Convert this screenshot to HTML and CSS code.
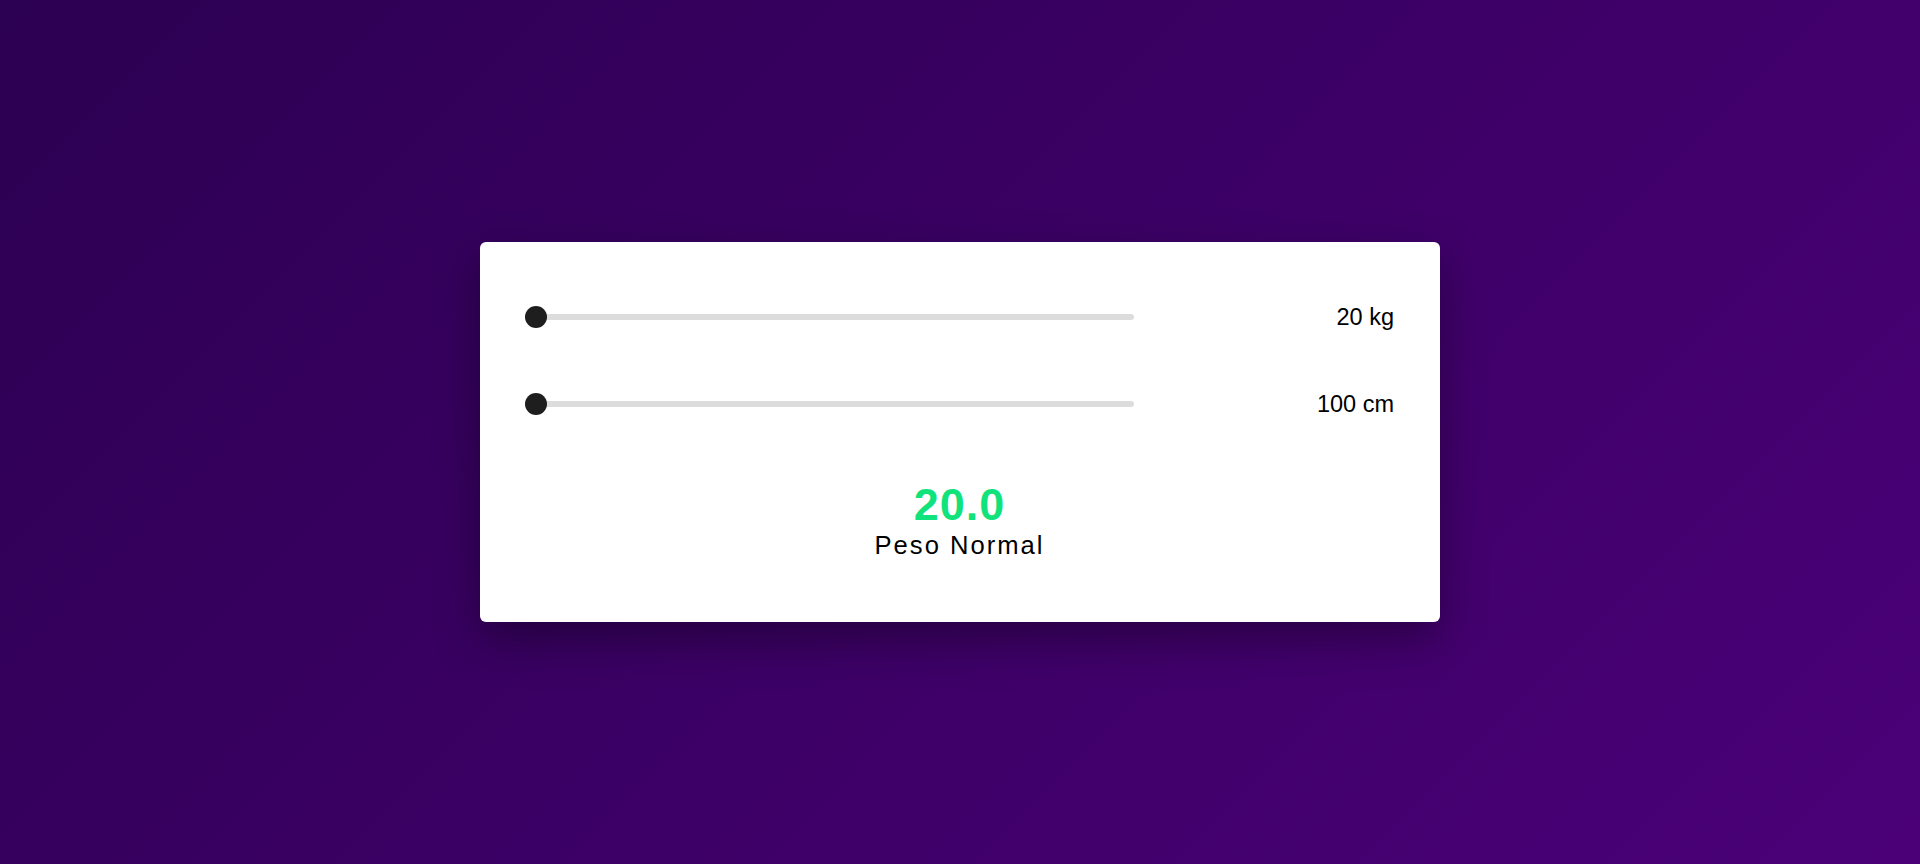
FILE: index.html
```html
<!DOCTYPE html>
<html lang="pt">
<head>
<meta charset="utf-8">
<title>Calculadora de IMC</title>
<link rel="stylesheet" href="styles.css">
</head>
<body>
<main class="card">
  <div class="row">
    <input class="slider" type="range" min="20" max="200" value="20" aria-label="Peso">
    <span class="value">20 kg</span>
  </div>
  <div class="row">
    <input class="slider" type="range" min="100" max="220" value="100" aria-label="Altura">
    <span class="value">100 cm</span>
  </div>
  <div class="result">
    <div class="bmi">20.0</div>
    <div class="label">Peso Normal</div>
  </div>
</main>
</body>
</html>
```
FILE: styles.css
```css
* { box-sizing: border-box; }
html, body { height: 100%; }
body {
  margin: 0;
  font-family: "Liberation Sans", Arial, sans-serif;
  background: linear-gradient(135deg, #2c0052 0%, #4b0078 100%);
  display: flex;
  align-items: center;
  justify-content: center;
}
.card {
  width: 960px;
  background: #fff;
  border-radius: 6px;
  padding: 53px 46px 63px 45px;
  box-shadow: 0 18px 45px rgba(0, 0, 0, 0.35);
  display: flex;
  flex-direction: column;
  gap: 43px;
}
.row {
  height: 44px;
  display: flex;
  align-items: center;
  justify-content: space-between;
}
.slider {
  -webkit-appearance: none;
  appearance: none;
  width: 609px;
  height: 6px;
  margin: 0;
  background: #dcdcdc;
  border-radius: 3px;
  outline: none;
}
.slider::-webkit-slider-thumb {
  -webkit-appearance: none;
  appearance: none;
  width: 22px;
  height: 22px;
  border-radius: 50%;
  background: #1e1e1e;
  border: none;
}
.value {
  font-size: 23.5px;
  color: #000;
}
.result {
  margin-top: 13px;
  display: flex;
  flex-direction: column;
  align-items: center;
  gap: 6px;
}
.bmi {
  font-size: 45px;
  line-height: 1;
  font-weight: 700;
  color: #10e27c;
  letter-spacing: 1px;
}
.label {
  font-size: 25.6px;
  line-height: 1;
  letter-spacing: 2px;
  color: #000;
}
```
